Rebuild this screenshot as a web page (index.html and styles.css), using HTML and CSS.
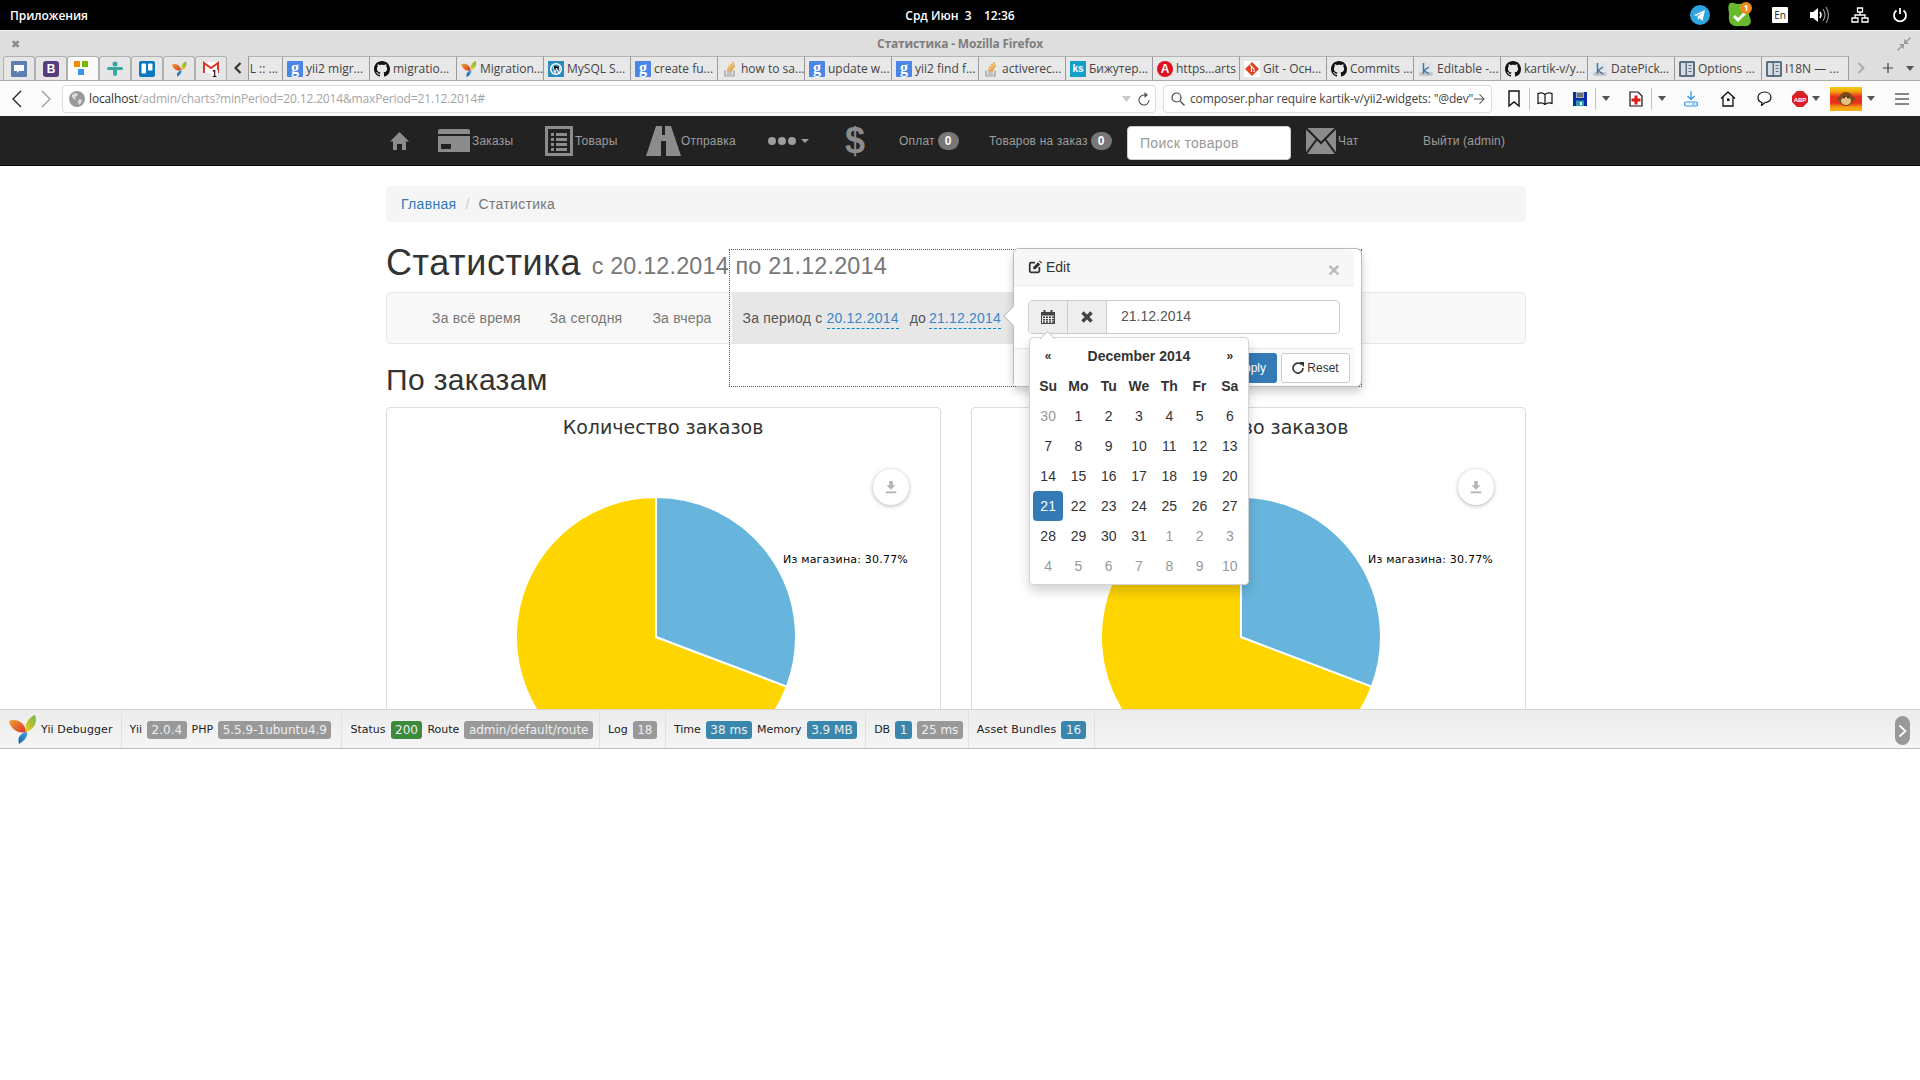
FILE: index.html
```html
<!DOCTYPE html>
<html lang="ru">
<head>
<meta charset="utf-8">
<title>Статистика</title>
<link rel="stylesheet" href="styles.css">
</head>
<body>
<svg class="defs" width="0" height="0" aria-hidden="true">
  <defs>
    <linearGradient id="yo" x1="0" y1="0" x2="1" y2="1"><stop offset="0" stop-color="#f0a030"/><stop offset="1" stop-color="#d8342a"/></linearGradient>
    <linearGradient id="yg" x1="1" y1="0" x2="0" y2="1"><stop offset="0" stop-color="#6cb544"/><stop offset="1" stop-color="#f4d020"/></linearGradient>
    <linearGradient id="yb" x1="1" y1="0" x2="0" y2="1"><stop offset="0" stop-color="#3fa4dc"/><stop offset="1" stop-color="#1c5fa8"/></linearGradient>
    <linearGradient id="flag" x1="0" y1="0" x2="0" y2="1"><stop offset="0" stop-color="#f7c818"/><stop offset=".18" stop-color="#f4a80e"/><stop offset=".4" stop-color="#e8301c"/><stop offset=".66" stop-color="#e8301c"/><stop offset=".85" stop-color="#f6a010"/><stop offset="1" stop-color="#f6b018"/></linearGradient>
    <symbol id="i-yii" viewBox="0 0 28 29">
      <path fill="url(#yo)" d="M0 6C7 3 16 7 17 17 10 19 2 15 0 6z"/>
      <path fill="url(#yg)" d="M26 0C29 8 24 15 17 17 15 10 19 3 26 0z"/>
      <path fill="url(#yb)" d="M18 17C19 22 15 26 10 29 8 23 11 18 18 17z"/>
    </symbol>
    <symbol id="i-gh" viewBox="0 0 16 16">
      <path fill="#111" d="M8 0C3.58 0 0 3.58 0 8c0 3.54 2.29 6.53 5.47 7.59.4.07.55-.17.55-.38 0-.19-.01-.82-.01-1.49-2.01.37-2.53-.49-2.69-.94-.09-.23-.48-.94-.82-1.13-.28-.15-.68-.52-.01-.53.63-.01 1.08.58 1.23.82.72 1.21 1.87.87 2.33.66.07-.52.28-.87.51-1.07-1.78-.2-3.64-.89-3.64-3.95 0-.87.31-1.59.82-2.15-.08-.2-.36-1.02.08-2.12 0 0 .67-.21 2.2.82.64-.18 1.32-.27 2-.27.68 0 1.36.09 2 .27 1.53-1.04 2.2-.82 2.2-.82.44 1.1.16 1.92.08 2.12.51.56.82 1.27.82 2.15 0 3.07-1.87 3.75-3.65 3.95.29.25.54.73.54 1.48 0 1.07-.01 1.93-.01 2.2 0 .21.15.46.55.38A8.013 8.013 0 0016 8c0-4.42-3.58-8-8-8z"/>
    </symbol>
    <symbol id="i-so" viewBox="0 0 16 16">
      <path fill="none" stroke="#999" stroke-width="1.2" d="M3 9.5v5.5h9V9.5M5 13h5M5 11h5"/>
      <path fill="none" stroke="#e8a33a" stroke-width="1.3" d="M5 9l5 .8M5.5 7l5 1.8M6.5 5l4.5 3M8.3 3l3.5 4M10.5 1l2 5"/>
    </symbol>
    <symbol id="i-k" viewBox="0 0 16 16">
      <rect x="1" y="1" width="14" height="14" rx="2" fill="#e2e6ea"/>
      <rect x="1" y="11" width="14" height="4" rx="2" fill="#c4c8cc"/>
      <path fill="none" stroke="#4a6f9a" stroke-width="1.5" d="M5.5 2v11M11 6L6 9.5 11 13"/>
    </symbol>
    <symbol id="i-doc" viewBox="0 0 16 16">
      <rect x="0" y="0" width="16" height="16" rx="1.5" fill="#5c6f80"/>
      <rect x="2" y="2" width="4.5" height="12" fill="#d5dbe0"/>
      <rect x="8" y="2" width="6" height="12" fill="#d5dbe0"/>
      <path stroke="#5c6f80" stroke-width="1.2" d="M9.5 4.5h3M9.5 7.500h3M9.500 10.500h3"/>
    </symbol>
    <symbol id="i-edit" viewBox="0 0 16 16">
      <path fill="none" stroke="#333" stroke-width="2" d="M8 3H3.500A1.500 1.500 0 0 0 2 4.500v8A1.500 1.500 0 0 0 3.500 14h8a1.500 1.500 0 0 0 1.500-1.500V8"/>
      <path fill="#333" d="M6 8l5.500-5.500 2.500 2.500L8.500 10.500H6zM12.500 1.500l1-1 2.500 2.500-1 1z"/>
    </symbol>
    <symbol id="i-dl" viewBox="0 0 16 16">
      <path fill="#b3b3b3" d="M6 1h4v5h3L8 11 3 6h3zM2 13h12v2H2z"/>
    </symbol>
    <symbol id="i-caret" viewBox="0 0 10 6"><path fill="#555" d="M0 0h10L5 6z"/></symbol>
    <symbol id="chart" viewBox="0 0 553 440">
      <text class="ch-title" x="276" y="26" text-anchor="middle">Количество заказов</text>
      <path d="M269 229L399.900 278.600A140 140 0 1 1 269 89z" fill="#ffd500" stroke="#fff" stroke-width="2"/>
      <path d="M269 229V89A140 140 0 0 1 399.900 278.600z" fill="#67b5dc" stroke="#fff" stroke-width="2"/>
      <text class="ch-label" x="396" y="155">Из магазина: 30.77%</text>
    </symbol>
  </defs>
</svg>

<header class="panel">
  <div class="panel-left">Приложения</div>
  <div class="panel-clock">Срд Июн  3    12:36</div>
  <div class="tray">
    <span class="tray-cell"><svg width="20" height="20" viewBox="0 0 20 20"><circle cx="10" cy="10" r="10" fill="#2ca5e0"/><path fill="#fff" d="M4 10l11-5-2.500 11-3-3-1.500 2-.5-3.500 5-4-6.500 3.500z"/></svg></span>
    <span class="tray-cell"><svg width="24" height="26" viewBox="0 0 24 26"><path fill="#68b92e" d="M2 1c4-1 5 1 8 1s7-1 9 2 1 6 2 9 3 6 1 9-6 2-9 2-7 1-10-2-2-7-2-10-2-8 1-11z"/><path fill="none" stroke="#fff" stroke-width="3" d="M6 14l4 4 7-7"/><circle cx="18" cy="6" r="6" fill="#f28a18"/><text class="skype-n" x="18" y="9" text-anchor="middle">1</text></svg></span>
    <span class="tray-cell"><span class="lang">En</span></span>
    <span class="tray-cell"><svg width="20" height="18" viewBox="0 0 20 18"><path fill="#fff" d="M0 6h3l5-4v14l-5-4H0z"/><path fill="none" stroke="#fff" stroke-width="1.500" d="M10 6q2 3 0 6"/><path fill="none" stroke="#999" stroke-width="1.200" d="M13 3q4 6 0 12M16 1q5 8 0 16"/></svg></span>
    <span class="tray-cell"><svg width="18" height="16" viewBox="0 0 18 16"><path fill="none" stroke="#fff" stroke-width="1.300" d="M6.500 1h5v4h-5zM1 11h6v4H1zM11 11h6v4h-6zM9 5v3M4 11V8h10v3"/></svg></span>
    <span class="tray-cell"><svg width="16" height="16" viewBox="0 0 16 16"><path fill="none" stroke="#fff" stroke-width="1.800" d="M8 1v6M4.500 3.500a6 6 0 1 0 7 0"/></svg></span>
  </div>
</header>

<div class="titlebar">
  <span class="tb-close">✖</span>
  <span class="tb-title">Статистика - Mozilla Firefox</span>
  <svg class="tb-restore" width="14" height="14" viewBox="0 0 14 14"><path fill="#999" d="M13 0l1 1-4 4 2 2H7V2l2 2zM0 13l4-4-2-2h5v5l-2-2-4 4z"/></svg>
</div>

<div class="tabstrip">
  <span class="pin"><svg width="16" height="16" viewBox="0 0 16 16"><rect width="16" height="16" rx="1" fill="#5b7fae"/><path fill="#fff" d="M3 4h10v6H8l-2 2v-2H3z"/></svg></span>
  <span class="pin"><span class="bs">B</span></span>
  <span class="pin pin-active"><svg width="18" height="16" viewBox="0 0 18 16"><rect x="0" y="0" width="6" height="6" fill="#f28a00"/><rect x="8" y="0" width="6" height="6" fill="#7ab800"/><rect x="4" y="8" width="6" height="6" fill="#3c93ee"/></svg></span>
  <span class="pin"><svg width="16" height="16" viewBox="0 0 16 16"><circle cx="8" cy="3" r="2.500" fill="#38a89d"/><rect x="0" y="6" width="16" height="3" rx="1.500" fill="#38a89d"/><rect x="6" y="6" width="4" height="9" rx="2" fill="#38a89d"/></svg></span>
  <span class="pin"><svg width="16" height="16" viewBox="0 0 16 16"><rect width="16" height="16" rx="2" fill="#0a79bf"/><rect x="2.500" y="2.500" width="4.500" height="10" rx="1" fill="#fff"/><rect x="9" y="2.500" width="4.500" height="7" rx="1" fill="#fff"/></svg></span>
  <span class="pin"><svg width="15" height="16"><use href="#i-yii"/></svg></span>
  <span class="pin"><svg width="16" height="16" viewBox="0 0 16 16"><path fill="#fff" d="M0 1h16v11H0z"/><path fill="none" stroke="#d9352a" stroke-width="2" d="M1 12V2l7 5 7-5v10"/><rect x="8" y="9" width="7" height="7" fill="#fff"/><text class="gm-n" x="11.500" y="15.500" text-anchor="middle">1</text></svg></span>
  <span class="tab-arrow"><svg width="8" height="12" viewBox="0 0 8 12"><path fill="none" stroke="#333" stroke-width="2.200" d="M6.500 1L1.500 6l5 5"/></svg></span>
  <span class="tab tab-cut"><span class="tab-t">L :: ...</span></span>
  <span class="tab"><span class="fav-g">g</span><span class="tab-t">yii2 migr...</span></span>
  <span class="tab"><svg class="fav" width="16" height="16"><use href="#i-gh"/></svg><span class="tab-t">migratio...</span></span>
  <span class="tab"><svg class="fav" width="16" height="16"><use href="#i-yii"/></svg><span class="tab-t">Migration...</span></span>
  <span class="tab"><svg class="fav" width="16" height="16" viewBox="0 0 16 16"><rect width="16" height="16" fill="#2a8cc0"/><circle cx="8" cy="8" r="6" fill="#fff"/><circle cx="8" cy="8" r="4.500" fill="#2a8cc0"/><path stroke="#fff" d="M5 5l2 7 1.500-5 2 5 1-6"/></svg><span class="tab-t">MySQL S...</span></span>
  <span class="tab"><span class="fav-g">g</span><span class="tab-t">create fu...</span></span>
  <span class="tab"><svg class="fav" width="16" height="16"><use href="#i-so"/></svg><span class="tab-t">how to sa...</span></span>
  <span class="tab"><span class="fav-g">g</span><span class="tab-t">update w...</span></span>
  <span class="tab"><span class="fav-g">g</span><span class="tab-t">yii2 find f...</span></span>
  <span class="tab"><svg class="fav" width="16" height="16"><use href="#i-so"/></svg><span class="tab-t">activerec...</span></span>
  <span class="tab"><span class="fav-ks">ks</span><span class="tab-t">Бижутер...</span></span>
  <span class="tab"><span class="fav-a">A</span><span class="tab-t">https...arts</span></span>
  <span class="tab"><svg class="fav" width="16" height="16" viewBox="0 0 16 16"><rect width="16" height="16" fill="#fff"/><path fill="#e2401f" d="M8 1l7 7-7 7-7-7z"/><path stroke="#fff" stroke-width="1.200" d="M6 4l4 4v3M7.500 6v5"/></svg><span class="tab-t">Git - Осн...</span></span>
  <span class="tab"><svg class="fav" width="16" height="16"><use href="#i-gh"/></svg><span class="tab-t">Commits ...</span></span>
  <span class="tab"><svg class="fav" width="16" height="16"><use href="#i-k"/></svg><span class="tab-t">Editable -...</span></span>
  <span class="tab"><svg class="fav" width="16" height="16"><use href="#i-gh"/></svg><span class="tab-t">kartik-v/y...</span></span>
  <span class="tab"><svg class="fav" width="16" height="16"><use href="#i-k"/></svg><span class="tab-t">DatePick...</span></span>
  <span class="tab"><svg class="fav" width="16" height="16"><use href="#i-doc"/></svg><span class="tab-t">Options ...</span></span>
  <span class="tab"><svg class="fav" width="16" height="16"><use href="#i-doc"/></svg><span class="tab-t">I18N — ...</span></span>
  <span class="tab-next"><svg width="8" height="12" viewBox="0 0 8 12"><path fill="none" stroke="#aaa" stroke-width="1.800" d="M1.500 1l5 5-5 5"/></svg></span>
  <span class="tab-plus"><svg width="12" height="12" viewBox="0 0 12 12"><path stroke="#444" stroke-width="1.200" d="M6 1v10M1 6h10"/></svg></span>
  <span class="tab-down"><svg width="8" height="5"><use href="#i-caret"/></svg></span>
</div>

<div class="toolbar">
  <span class="tool-nav"><svg width="14" height="18" viewBox="0 0 14 18"><path fill="none" stroke="#222" stroke-width="1.300" d="M11 1L3 9l8 8"/></svg></span>
  <span class="tool-nav"><svg width="14" height="18" viewBox="0 0 14 18"><path fill="none" stroke="#999" stroke-width="1.200" d="M3 1l8 8-8 8"/></svg></span>
  <div class="urlbar">
    <svg width="16" height="16" viewBox="0 0 16 16"><circle cx="8" cy="8" r="8" fill="#9a9a9a"/><path fill="#dcdcdc" d="M3 4l3-2 3 1-1 2-2 1 1 3-2-1-2-2zM10 8l3 1-1 3-2 2-1-3z"/></svg>
    <span class="url-text"><span class="url-host">localhost</span>/admin/charts?minPeriod=20.12.2014&amp;maxPeriod=21.12.2014#</span>
    <svg class="url-drop" width="9" height="6" viewBox="0 0 9 6"><path fill="#c8c8c8" d="M0 0h9L4.500 6z"/></svg>
    <svg class="url-reload" width="12" height="14" viewBox="0 0 12 14"><path fill="none" stroke="#555" stroke-width="1.100" d="M8 3.500a5 5 0 1 0 3 4.500"/><path fill="#555" d="M6.500 0v6l3.500-3z"/></svg>
  </div>
  <div class="searchbar">
    <svg width="14" height="14" viewBox="0 0 14 14"><circle cx="5.500" cy="5.500" r="4.500" fill="none" stroke="#444" stroke-width="1.200"/><path stroke="#444" stroke-width="1.300" d="M9 9l4.500 4.500"/></svg>
    <span class="search-text">composer.phar require kartik-v/yii2-widgets: "@dev"</span>
    <svg class="search-go" width="11" height="12" viewBox="0 0 12 12"><path fill="none" stroke="#555" stroke-width="1.100" d="M0 6h11M6 1l5 5-5 5"/></svg>
  </div>
  <span class="tool t-a"><svg width="14" height="18" viewBox="0 0 14 18"><path fill="none" stroke="#111" stroke-width="1.400" d="M2 1h10v15l-5-4-5 4z"/></svg></span>
  <span class="tool-sep"></span>
  <span class="tool t-b"><svg width="16" height="13" viewBox="0 0 16 13"><path fill="none" stroke="#111" stroke-width="1.200" d="M8 2.500C6 .8 3 .8 1 1.500v10c2-.7 5-.7 7 1 2-1.700 5-1.700 7-1v-10c-2-.7-5-.7-7 1zM8 2.500v10"/></svg></span>
  <span class="tool t-c"><svg width="14" height="14" viewBox="0 0 14 14"><rect width="14" height="14" fill="#0a2aa8"/><rect x="3" y="0" width="8" height="6" fill="#9fb0b8"/><path stroke="#333" d="M4 2h6M4 4h6"/><rect x="3" y="8.500" width="8" height="5.500" fill="#2ea0a8"/><rect x="7" y="10" width="2" height="3" fill="#fff"/></svg></span>
  <span class="tool-sep"></span>
  <span class="tool-caret"><svg width="8" height="5"><use href="#i-caret"/></svg></span>
  <span class="tool t-d"><svg width="14" height="16" viewBox="0 0 14 16"><path fill="#fff" stroke="#111" stroke-width="1.200" d="M1 1h8l4 4v10H1z"/><path fill="#e01818" d="M5.500 4.500h3v3h3v3h-3v3h-3v-3h-3v-3h3z"/></svg></span>
  <span class="tool-sep"></span>
  <span class="tool-caret"><svg width="8" height="5"><use href="#i-caret"/></svg></span>
  <span class="tool t-e"><svg width="14" height="16" viewBox="0 0 14 16"><path fill="none" stroke="#2a94e8" stroke-width="1.200" d="M7 0v8M3.500 5L7 8.500 10.500 5"/><rect x=".6" y="11" width="12.800" height="4" rx="1.500" fill="none" stroke="#2a94e8" stroke-width="1.200"/><path stroke="#2a94e8" d="M8 13h3"/></svg></span>
  <span class="tool t-f"><svg width="16" height="16" viewBox="0 0 16 16"><path fill="none" stroke="#111" stroke-width="1.300" d="M1 7.500L8 1l7 6.500M3 6v9h10V6"/><rect x="7" y="7.500" width="2.500" height="2.500" fill="#111"/></svg></span>
  <span class="tool t-f2"><svg width="15" height="15" viewBox="0 0 15 15"><path fill="none" stroke="#111" stroke-width="1.200" d="M7.500 1C3.500 1 1 3.500 1 6.500c0 2.500 2 4.500 4 5l-.5 3 3.500-3c3.500 0 6-2.300 6-5C14 3.500 11.500 1 7.500 1z"/></svg></span>
  <span class="tool t-g"><svg width="16" height="16" viewBox="0 0 16 16"><path fill="#d81f26" d="M5 0h6l5 5v6l-5 5H5l-5-5V5z"/><text class="abp" x="8" y="10.500" text-anchor="middle">ABP</text></svg></span>
  <span class="tool-caret tc-16"><svg width="8" height="5"><use href="#i-caret"/></svg></span>
  <span class="tool t-h"><svg width="32" height="24" viewBox="0 0 32 24"><rect width="32" height="24" fill="url(#flag)"/><circle cx="16" cy="12" r="7" fill="#7a4a1c"/><circle cx="9" cy="12" r="2" fill="#7a4a1c"/><circle cx="23" cy="12" r="2" fill="#7a4a1c"/><ellipse cx="16" cy="14" rx="5" ry="4" fill="#e8c080"/><circle cx="14" cy="10.500" r="1" fill="#222"/><circle cx="18" cy="10.500" r="1" fill="#222"/></svg></span>
  <span class="tool-caret tc-18"><svg width="8" height="5"><use href="#i-caret"/></svg></span>
  <span class="tool t-i"><svg width="14" height="12" viewBox="0 0 14 12"><path stroke="#111" stroke-width="1.200" d="M0 1h14M0 6h14M0 11h14"/></svg></span>
</div>

<nav class="topnav">
  <span class="ni"><svg width="19" height="18" viewBox="0 0 19 18"><path fill="#8c8c8c" d="M9.500 0L19 9.500h-3V18h-4v-6H7v6H3V9.500H0z"/></svg></span>
  <span class="ni ni-card"><svg width="32" height="23" viewBox="0 0 32 23"><path fill="#8c8c8c" d="M2 0h28a2 2 0 0 1 2 2v3H0V2a2 2 0 0 1 2-2zM0 7h32v16H0z"/><rect x="3" y="15" width="10" height="5" fill="#222"/></svg><span>Заказы</span></span>
  <span class="ni"><svg width="28" height="30" viewBox="0 0 28 30"><path fill="#8c8c8c" fill-rule="evenodd" d="M0 0h28v30H0zM3 3v24h22V3z"/><path fill="#8c8c8c" d="M6 7h3v3H6zM11 7h11v3H11zM6 12h3v3H6zM11 12h11v3H11zM6 17h3v3H6zM11 17h11v3H11zM6 22h3v3H6zM11 22h11v3H11z"/></svg><span>Товары</span></span>
  <span class="ni ni-road"><svg width="35" height="30" viewBox="0 0 35 30"><path fill="#8c8c8c" d="M10 0h15l10 30H0z"/><path fill="#222" d="M16 0h3v9h-3zM15 15h5v15h-5z"/></svg><span>Отправка</span></span>
  <span class="ni ni-dots"><i class="dot"></i><i class="dot"></i><i class="dot"></i><i class="nav-caret"></i></span>
  <span class="ni ni-usd">$</span>
  <span class="ni ni-tx"><span>Оплат</span><b class="nbadge">0</b></span>
  <span class="ni ni-tx"><span>Товаров на заказ</span><b class="nbadge">0</b></span>
  <span class="ni"><input class="nsearch" placeholder="Поиск товаров" aria-label="Поиск товаров"></span>
  <span class="ni"><svg width="30" height="26" viewBox="0 0 30 26"><rect width="30" height="26" fill="#8c8c8c"/><path fill="none" stroke="#222" stroke-width="2" d="M0 0l15 15L30 0M0 26l11-15M30 26L19 11"/></svg><span>Чат</span></span>
  <span class="ni">Выйти (admin)</span>
</nav>

<main class="page">
  <div class="container">
    <ol class="crumbs"><li><a>Главная</a></li><li class="crumb-sep">/</li><li class="crumb-cur">Статистика</li></ol>
    <h1 class="h1">Статистика <small>с 20.12.2014 по 21.12.2014</small></h1>
    <div class="filter">
      <a class="fl fl-first">За всё время</a>
      <a class="fl">За сегодня</a>
      <a class="fl">За вчера</a>
      <span class="fl-active">За период с <a class="edit-link">20.12.2014</a><span class="fl-to">до</span><a class="edit-link">21.12.2014</a></span>
    </div>
    <h2 class="h2">По заказам</h2>
    <div class="charts">
      <section class="card">
        <svg class="chart-svg" width="553" height="440"><use href="#chart"/></svg>
        <span class="export"><svg width="14" height="14"><use href="#i-dl"/></svg></span>
      </section>
      <section class="card">
        <svg class="chart-svg" width="553" height="440"><use href="#chart"/></svg>
        <span class="export"><svg width="14" height="14"><use href="#i-dl"/></svg></span>
      </section>
    </div>
  </div>

  <div class="dotted"></div>

  <div class="popover">
    <span class="pop-arrow"></span>
    <div class="pop-inner">
      <div class="pop-head"><span class="pop-title"><svg width="14" height="14"><use href="#i-edit"/></svg>Edit</span><span class="pop-x">×</span></div>
      <div class="pop-body">
        <div class="igroup">
          <span class="addon"><svg width="14" height="14" viewBox="0 0 14 14"><path fill="#444" fill-rule="evenodd" d="M0 2h2.500V0h2v2h5V0h2v2H14v12H0zM1 5.500V13h12V5.500z"/><path fill="#444" d="M2 6.500h2v1.500H2zM5 6.500h2v1.500H5zM8 6.500h2v1.500H8zM11 6.500h2v1.500h-2zM2 9h2v1.500H2zM5 9h2v1.500H5zM8 9h2v1.500H8zM11 9h2v1.500h-2zM2 11.300h2v1.500H2zM5 11.300h2v1.500H5zM8 11.300h2v1.500H8zM11 11.300h2v1.500h-2z"/></svg></span>
          <span class="addon"><svg width="12" height="12" viewBox="0 0 12 12"><path fill="none" stroke="#444" stroke-width="3.400" d="M1.500 1.500l9 9M10.500 1.500l-9 9"/></svg></span>
          <span class="ivalue">21.12.2014</span>
        </div>
      </div>
      <div class="pop-foot">
        <span class="btn btn-apply">Apply</span>
        <span class="btn btn-reset"><svg width="12" height="12" viewBox="0 0 12 12"><path fill="none" stroke="#333" stroke-width="1.600" d="M9.500 2.500a5 5 0 1 0 1.500 3.500"/><path fill="#333" d="M7 0h5v5z"/></svg>Reset</span>
      </div>
    </div>
    <div class="cal">
      <span class="cn">«</span><span class="cm">December 2014</span><span class="cn">»</span>
      <b>Su</b><b>Mo</b><b>Tu</b><b>We</b><b>Th</b><b>Fr</b><b>Sa</b>
      <i class="old">30</i><i>1</i><i>2</i><i>3</i><i>4</i><i>5</i><i>6</i>
      <i>7</i><i>8</i><i>9</i><i>10</i><i>11</i><i>12</i><i>13</i>
      <i>14</i><i>15</i><i>16</i><i>17</i><i>18</i><i>19</i><i>20</i>
      <i class="sel">21</i><i>22</i><i>23</i><i>24</i><i>25</i><i>26</i><i>27</i>
      <i>28</i><i>29</i><i>30</i><i>31</i><i class="old">1</i><i class="old">2</i><i class="old">3</i>
      <i class="old">4</i><i class="old">5</i><i class="old">6</i><i class="old">7</i><i class="old">8</i><i class="old">9</i><i class="old">10</i>
    </div>
  </div>
</main>

<footer class="debug">
  <div class="dblock dlogo"><svg width="28" height="29"><use href="#i-yii"/></svg><span>Yii Debugger</span></div>
  <div class="dblock dblock-ver"><span>Yii</span><em class="lb">2.0.4</em><span>PHP</span><em class="lb">5.5.9-1ubuntu4.9</em></div>
  <div class="dblock dblock-route"><span>Status</span><em class="lb lb-ok">200</em><span>Route</span><em class="lb">admin/default/route</em></div>
  <div class="dblock"><span>Log</span><em class="lb">18</em></div>
  <div class="dblock"><span>Time</span><em class="lb lb-info">38 ms</em><span>Memory</span><em class="lb lb-info">3.9 MB</em></div>
  <div class="dblock dblock-db"><span>DB</span><em class="lb lb-info">1</em><em class="lb">25 ms</em></div>
  <div class="dblock"><span class="d-wide">Asset Bundles</span><em class="lb lb-info">16</em></div>
  <span class="dtoggle"><svg width="9" height="14" viewBox="0 0 9 14"><path fill="none" stroke="#fff" stroke-width="1.800" d="M1.500 1.500L7.500 7l-6 5.500"/></svg></span>
</footer>
</body>
</html>
```
FILE: styles.css
```css
* { box-sizing: border-box; }
html, body { margin: 0; padding: 0; background: #fff; }
body { width: 1920px; height: 1080px; overflow: hidden; font-family: "Liberation Sans", Arial, sans-serif; font-size: 14px; color: #333; }
.defs { position: absolute; }
svg { display: block; flex: none; }

/* desktop panel */
.panel { height: 31px; background: #000; border-bottom: 1px solid #f4f4f4; display: grid; grid-template-columns: 1fr auto 1fr; align-items: center; color: #fff; font-family: "Open Sans", "Noto Sans", sans-serif; font-weight: 600; font-size: 12px; }
.panel-left { padding-left: 10px; letter-spacing: -.05px; }
.panel-clock { white-space: pre; }
.tray { display: flex; justify-content: flex-end; }
.tray-cell { width: 40px; height: 30px; display: flex; align-items: center; justify-content: center; }
.lang { width: 16px; height: 16px; background: #fff; color: #222; border-radius: 1px; font-size: 10px; font-weight: 400; text-align: center; line-height: 16px; }
.skype-n { font: 700 9px "Open Sans", sans-serif; fill: #fff; }

/* window title */
.titlebar { height: 25px; background: #dedede; display: grid; grid-template-columns: 1fr auto 1fr; align-items: center; font-family: "Open Sans", "Noto Sans", sans-serif; }
.tb-close { padding-left: 11px; color: #8c8c8c; font-size: 11px; }
.tb-title { font-size: 12px; font-weight: 700; color: #7d7d7d; letter-spacing: -.17px; }
.tb-restore { justify-self: end; margin-right: 9px; }

/* tabs */
.tabstrip { height: 24px; background: #dedede; display: flex; padding-left: 3px; font-family: "Open Sans", "Noto Sans", sans-serif; font-size: 12px; color: #444; overflow: hidden; }
.pin { width: 32px; height: 24px; background: #e6e6e6; border: 1px solid #b0b0b0; border-bottom: 0; border-radius: 3px 3px 0 0; display: flex; align-items: center; justify-content: center; }
.pin-active { background: #fafafa; }
.bs { width: 16px; height: 16px; background: #563d7c; color: #fff; border-radius: 3px; font: 700 12px/16px "Liberation Sans", sans-serif; text-align: center; }
.tab-arrow { width: 21px; display: flex; align-items: center; justify-content: center; }
.tab { width: 87px; height: 24px; flex: none; background: #e8e8e8; border-right: 1px solid #9a9a9a; border-top: 1px solid #b4b4b4; display: flex; align-items: center; gap: 3px; padding-left: 4px; overflow: hidden; white-space: nowrap; }
.tab-cut { width: 35px; justify-content: flex-end; padding: 0 4px 0 0; border-left: 1px solid #9a9a9a; }
.tab-t { flex: none; }
.fav { flex: none; }
.fav-g { width: 16px; height: 16px; flex: none; background: #4a86e8; color: #fff; font: 700 16px/13px "Liberation Serif", serif; text-align: center; border-radius: 1px; }
.fav-ks { width: 16px; height: 16px; flex: none; background: #12a0c8; color: #fff; font: 700 10px/16px "Liberation Sans", sans-serif; text-align: center; }
.fav-a { width: 16px; height: 16px; flex: none; background: #e01020; color: #fff; border-radius: 50%; font: 700 12px/16px "Liberation Sans", sans-serif; text-align: center; }
.tab-next { width: 24px; display: flex; align-items: center; justify-content: center; }
.tab-plus { width: 24px; display: flex; align-items: center; justify-content: center; margin-left: 3px; }
.tab-down { width: 20px; display: flex; align-items: center; justify-content: center; }

/* toolbar */
.toolbar { height: 36px; background: #fbfbfb; border-top: 1px solid #a9a9a9; display: flex; align-items: center; font-family: "Open Sans", "Noto Sans", sans-serif; font-size: 12px; color: #555; padding-left: 2px; }
.tool-nav { width: 29px; display: flex; justify-content: center; }
.urlbar { width: 1094px; height: 28px; margin-left: 2px; background: #fff; border: 1px solid #ddd; border-radius: 4px; display: flex; align-items: center; padding-left: 6px; color: #a5a5a5; }
.url-text { margin-left: 4px; white-space: nowrap; letter-spacing: -.15px; }
.url-host { color: #333; }
.url-drop { margin-left: auto; }
.url-reload { margin-left: 7px; margin-right: 5px; }
.searchbar { width: 329px; height: 28px; margin-left: 7px; background: #fff; border: 1px solid #ddd; border-radius: 4px; display: flex; align-items: center; padding-left: 7px; color: #444; }
.search-text { margin-left: 5px; white-space: nowrap; letter-spacing: -.15px; }
.search-go { margin-left: auto; margin-right: 6px; }
.tool { width: 30px; height: 28px; display: flex; align-items: center; justify-content: center; }
.tool-sep { width: 1px; height: 22px; background: #c4c4c4; flex: none; }
.tool-caret { width: 20px; display: flex; justify-content: center; }
.tc-16 { width: 16px; }
.tc-18 { width: 18px; }
.t-a { margin-left: 7px; }
.t-b { width: 29px; }
.t-c { margin-left: 6px; }
.t-d { margin-left: 5px; }
.t-e { margin-left: 4px; }
.t-f { margin-left: 7px; }
.t-f2 { margin-left: 6px; }
.t-g { width: 16px; margin-left: 13px; }
.t-h { width: 32px; margin-left: 6px; }
.t-i { margin-left: 7px; }
.abp { font: 700 6px "Liberation Sans", sans-serif; fill: #fff; }
.gm-n { font: 700 8px "DejaVu Sans Mono", monospace; fill: #000; }

/* site navbar */
.topnav { height: 50px; background: #222; border-bottom: 1px solid #080808; display: grid; grid-template-columns: 47px 108px 101px 122px 77px 54px 90px 138px 179px 117px auto; align-items: center; justify-content: start; padding-left: 390px; color: #9d9d9d; font-size: 12px; letter-spacing: .2px; }
.ni { display: flex; align-items: center; gap: 2px; white-space: nowrap; }
.ni-card { padding-left: 1px; }
.ni-road { gap: 0; }
.ni-dots { gap: 2px; }
.dot { width: 8px; height: 8px; border-radius: 50%; background: #9d9d9d; }
.nav-caret { width: 0; height: 0; margin-left: 3px; border-top: 4px solid #9d9d9d; border-left: 4px solid transparent; border-right: 4px solid transparent; }
.ni-usd { font-size: 36px; font-weight: 700; color: #8c8c8c; line-height: 1; }
.ni-tx { gap: 3px; }
.nbadge { min-width: 21px; height: 18px; border-radius: 10px; background: #777; color: #fff; font-size: 12px; line-height: 18px; text-align: center; }
.nsearch { width: 164px; height: 34px; margin-top: 4px; border: 1px solid #ccc; border-radius: 4px; background: #fff; padding: 0 12px; font: 14px "Liberation Sans", sans-serif; letter-spacing: .3px; }
.nsearch::placeholder { color: #999; opacity: 1; }

/* page */
.page { height: 543px; position: relative; overflow: hidden; background: #fff; }
.container { width: 1140px; margin-left: 386px; padding-top: 20px; }
.crumbs { list-style: none; margin: 0 0 21px; height: 36px; padding: 0 15px; background: #f5f5f5; border-radius: 4px; display: flex; align-items: center; gap: 9px; letter-spacing: .3px; }
.crumbs a { color: #337ab7; }
.crumb-sep { color: #ccc; }
.crumb-cur { color: #777; }
.h1 { margin: 0 0 9px; font-size: 36px; font-weight: 500; line-height: 39.6px; white-space: nowrap; letter-spacing: .6px; }
.h1 small { font-size: 23.4px; font-weight: 400; line-height: 1; color: #777; letter-spacing: .16px; vertical-align: 1px; }
.filter { height: 52px; margin-bottom: 19px; background: #f8f8f8; border: 1px solid #e7e7e7; border-radius: 4px; display: flex; align-items: stretch; padding-left: 30px; color: #777; letter-spacing: .2px; }
.fl { padding: 0 15px; line-height: 50px; }
.fl-first { margin-right: -1px; }
.fl-active { width: 300px; margin-left: 5px; padding-left: 11px; background: #e7e7e7; color: #555; line-height: 50px; white-space: nowrap; }
.edit-link { color: #3b85c9; padding-bottom: 2px; border-bottom: 1px dashed #08c; }
.fl-to { margin: 0 3px 0 11px; }
.h2 { margin: 0 0 11px; font-size: 30px; font-weight: 500; line-height: 33px; letter-spacing: .35px; }
.charts { display: grid; grid-template-columns: 555px 555px; column-gap: 30px; }
.card { position: relative; height: 420px; border: 1px solid #ddd; border-radius: 4px; background: #fff; }
.chart-svg { overflow: hidden; }
.ch-title { font: 19px "DejaVu Sans", sans-serif; fill: #333; }
.ch-label { font: 11px "DejaVu Sans", sans-serif; fill: #000; letter-spacing: .2px; }
.export { position: absolute; left: 486px; top: 61px; width: 36px; height: 36px; border-radius: 50%; background: #fff; box-shadow: 0 1px 4px rgba(0,0,0,.3); display: flex; align-items: center; justify-content: center; }

/* overlays */
.dotted { position: absolute; left: 729px; top: 83px; width: 633px; height: 138px; border: 1px dotted #555; }
.popover { position: absolute; left: 1013px; top: 82px; width: 349px; height: 139px; background: #fff; border: 1px solid #bbb; border-radius: 6px; box-shadow: 0 5px 10px rgba(0,0,0,.2); }
.pop-arrow { position: absolute; left: -8px; top: 60px; width: 14px; height: 14px; background: #fff; border-left: 1px solid #bbb; border-bottom: 1px solid #bbb; transform: rotate(45deg); }
.pop-inner { position: relative; width: 340px; height: 137px; display: flex; flex-direction: column; }
.pop-head { height: 37px; background: #f7f7f7; border-bottom: 1px solid #ebebeb; border-radius: 5px 5px 0 0; display: flex; align-items: center; justify-content: space-between; padding: 0 14px; }
.pop-title { display: flex; align-items: center; gap: 4px; }
.pop-x { font-size: 21px; font-weight: 700; color: #bbb; line-height: 1; margin: 4px 0 0 0; }
.pop-body { height: 62px; padding: 14px 14px 0; }
.igroup { width: 312px; height: 34px; display: flex; border: 1px solid #ccc; border-radius: 4px; }
.addon { width: 39px; flex: none; background: #eee; border-right: 1px solid #ccc; display: flex; align-items: center; justify-content: center; }
.ivalue { padding-left: 14px; line-height: 31px; color: #555; }
.pop-foot { flex: 1; background: #f9f9f9; border-top: 1px solid #e8e8e8; display: flex; justify-content: flex-end; align-items: center; gap: 4px; padding-right: 4px; font-size: 12px; }
.btn { height: 30px; border-radius: 3px; display: flex; align-items: center; justify-content: center; gap: 3px; }
.btn-apply { width: 80px; background: #337ab7; color: #fff; justify-content: flex-end; padding-right: 11px; }
.btn-reset { width: 69px; background: #fff; border: 1px solid #ccc; }
.cal { position: absolute; left: 15px; top: 88px; width: 220px; height: 248px; padding: 3px; background: #fff; border: 1px solid #d4d4d4; border-radius: 4px; box-shadow: 0 6px 12px rgba(0,0,0,.175); display: grid; grid-template-columns: repeat(7, 1fr); grid-auto-rows: 30px; text-align: center; line-height: 30px; }
.cal::before { content: ""; position: absolute; left: 12px; top: -5px; width: 10px; height: 10px; background: #fff; border-left: 1px solid #ccc; border-top: 1px solid #ccc; transform: rotate(45deg); }
.cal i { font-style: normal; border-radius: 4px; }
.cal .old { color: #999; }
.cal .sel { background: #337ab7; color: #fff; }
.cm { grid-column: span 5; font-weight: 700; }
.cn { font-weight: 700; font-size: 12px; }

/* yii debug bar */
.debug { height: 40px; background: linear-gradient(#ececec, #f5f5f5); border-top: 1px solid #d4d4d4; border-bottom: 1px solid #bdbdbd; display: flex; align-items: stretch; font: 11px "DejaVu Sans", Verdana, sans-serif; color: #222; position: relative; }
.dblock { display: flex; align-items: center; gap: 5px; padding: 1px 8px 0; border-right: 1px solid #e2e2e2; white-space: nowrap; }
.dlogo { gap: 4px; padding-left: 9px; letter-spacing: .1px; }
.dblock-ver { padding-right: 10px; }
.dblock-route { padding-right: 6px; }
.dblock-db { padding-right: 5px; }
.d-wide { letter-spacing: .15px; }
.lb { font-style: normal; font-size: 12px; height: 18px; line-height: 18px; padding: 0 4.5px; border-radius: 3px; background: #999; color: #eee; }
.lb-ok { background: #3c8b3c; }
.lb-info { background: #3a87ad; }
.dtoggle { position: absolute; left: 1895px; top: 6px; width: 15px; height: 29px; border-radius: 8px; background: #999; display: flex; align-items: center; justify-content: center; }
```
